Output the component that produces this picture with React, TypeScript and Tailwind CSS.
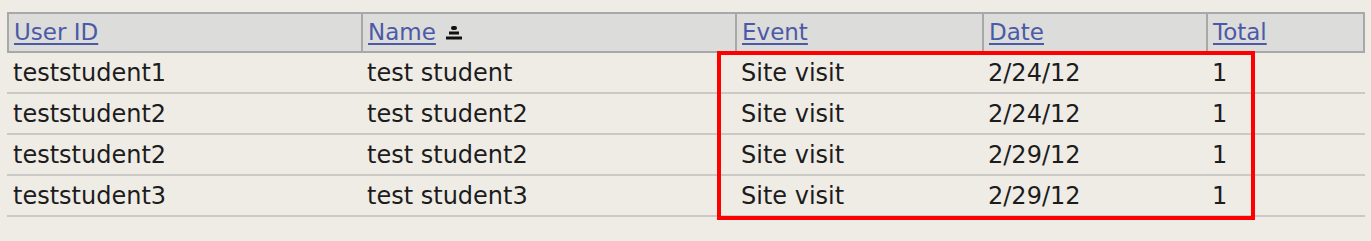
const columns = ['User ID', 'Name', 'Event', 'Date', 'Total'];

const rows = [
  ['teststudent1', 'test student', 'Site visit', '2/24/12', '1'],
  ['teststudent2', 'test student2', 'Site visit', '2/24/12', '1'],
  ['teststudent2', 'test student2', 'Site visit', '2/29/12', '1'],
  ['teststudent3', 'test student3', 'Site visit', '2/29/12', '1'],
];

const SortIcon = () => (
  <svg width="16" height="14" viewBox="0 0 16 14" className="ml-[10px] inline-block">
    <rect x="5" y="0" width="6" height="4" rx="2" fill="#111" />
    <rect x="3" y="5.5" width="10" height="3" fill="#111" />
    <rect x="0" y="10.5" width="16" height="3" fill="#111" />
  </svg>
);

const App = () => {
  return (
    <div className="w-[1371px] h-[241px] bg-[#efece6] pt-[12px] pl-[7px] relative overflow-hidden font-['DejaVu_Sans',Verdana,sans-serif] text-[#1c1c1c]">
      <div className="w-[1358px]">
        <div className="grid grid-cols-[352px_374px_247px_224px_157px] h-[41px] border-2 border-[#a8a8a8] bg-[#dcdcdb] text-[23px]">
          {columns.map((col, i) => (
            <div
              key={col}
              className={`flex items-center pl-[5px] ${i > 0 ? 'border-l-2 border-[#a8a8a8]' : ''}`}
            >
              <span className="text-[#4b5aa6] underline decoration-[2px] underline-offset-[3px]">{col}</span>
              {col === 'Name' && <SortIcon />}
            </div>
          ))}
        </div>
        {rows.map((row, r) => (
          <div
            key={r}
            className="grid grid-cols-[354px_374px_247px_224px_159px] h-[41px] border-b-2 border-[#cbc9c5] text-[24px]"
          >
            {row.map((cell, c) => (
              <div key={c} className="flex items-center pl-[6px] pt-[1px]">
                {cell}
              </div>
            ))}
          </div>
        ))}
      </div>
      <div className="absolute left-[717px] top-[51px] w-[538px] h-[169px] border-4 border-[#ff0000] pointer-events-none" />
    </div>
  );
};

export default App;
